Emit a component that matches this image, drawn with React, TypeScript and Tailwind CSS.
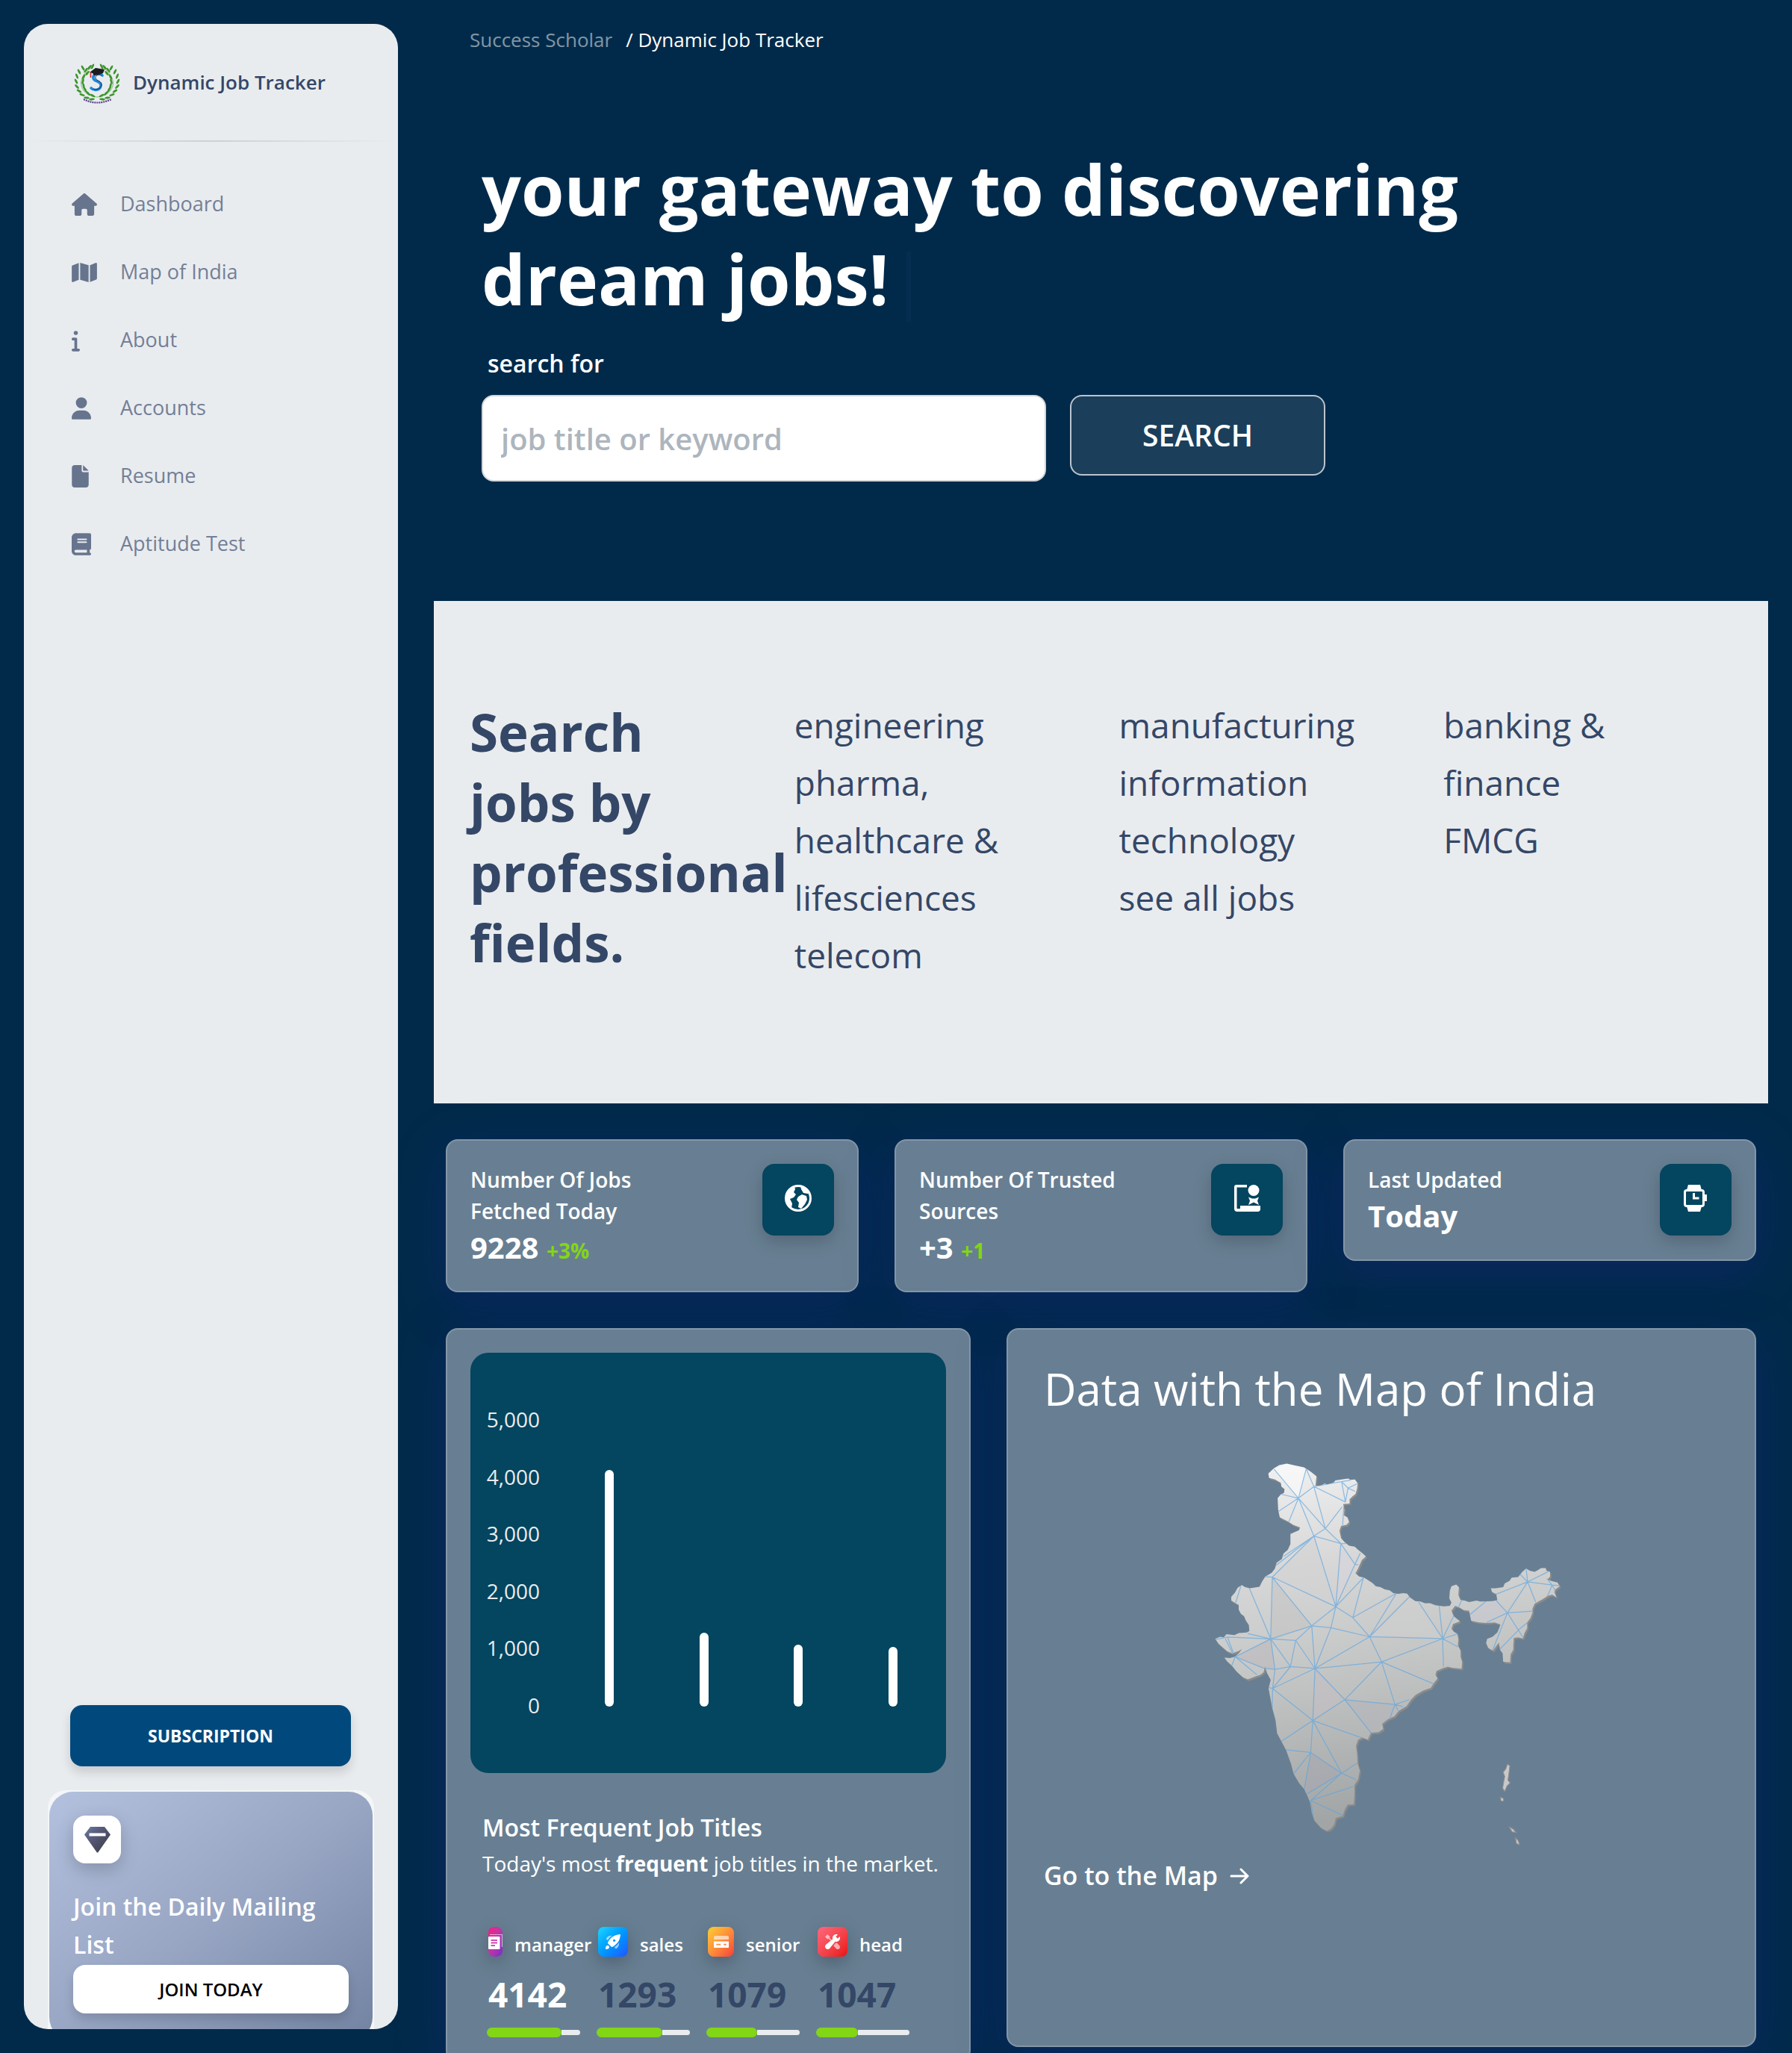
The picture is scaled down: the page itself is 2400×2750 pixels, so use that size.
import React from 'react';
import { FaBook, FaFile, FaHouse, FaInfo, FaMap, FaUser } from 'react-icons/fa6';

const NAV = [
  { label: 'Dashboard', Icon: FaHouse, width: 'w-[34px]' },
  { label: 'Map of India', Icon: FaMap, width: 'w-[34px]' },
  { label: 'About', Icon: FaInfo, width: 'w-[11px]' },
  { label: 'Accounts', Icon: FaUser, width: 'w-[26px]' },
  { label: 'Resume', Icon: FaFile, width: 'w-[23px]' },
  { label: 'Aptitude Test', Icon: FaBook, width: 'w-[26px]' },
];

const FIELDS = [
  ['engineering', 'pharma, healthcare & lifesciences', 'telecom'],
  ['manufacturing', 'information technology', 'see all jobs'],
  ['banking & finance', 'FMCG'],
];

const TICKS = ['5,000', '4,000', '3,000', '2,000', '1,000', '0'];
const CHART_MAX = 5000;

const CARD = 'rounded-2xl border-2 border-white/18 bg-[#687f93] shadow-[0_16px_64px_rgba(31,38,135,0.37)]';

/* ---------- logo ---------- */

// One side of the laurel: [x, y, angle] for every leaf.
const LEAVES: [number, number, number][] = [
  [20, 3, -50], [15, 7, -52], [24, 2, -65],
  [11, 4, 60], [6, 9, 62], [17, 11, -50],
  [3, 15, 68], [12, 16, -62], [2, 22, 62], [11, 22, -75],
  [3, 29, 48], [12, 28, 80], [6, 35, 34], [14, 33, 62],
  [10, 40, 20], [18, 38, 45], [16, 44, 6], [24, 41, 30], [23, 46, -8],
];

function Laurel() {
  return (
    <g>
      <path d="M22 4C12 10 7 20 9 28C12 38 20 42 30 43" fill="none" stroke="#3d9a2f" strokeWidth="0.600" />
      {LEAVES.map(([x, y, a]) => (
        <ellipse key={`${x}-${y}`} cx={x} cy={y} rx="3.800" ry="1.400" fill="#3b962c" transform={`rotate(${a} ${x} ${y})`} />
      ))}
    </g>
  );
}

function Logo() {
  return (
    <svg viewBox="0 -4 60 54" className="h-[54px] w-[60px] overflow-visible" aria-hidden="true">
      <Laurel />
      <g transform="matrix(-1 0 0 1 60 0)">
        <Laurel />
      </g>
      <path d="M37 14C33 9 24 12 25 18C26 23 36 21 35 28C34 34 26 35 22 31" fill="none" stroke="#1f86d8" strokeWidth="3.6" strokeLinecap="round" />
      <path d="M36 14C32 12 27 14 28 18C29 21 37 22 36 27C35 32 29 34 25 32" fill="none" stroke="#17324f" strokeWidth="1" />
      <path d="M20 10L28 4L40 6L38 11L32 13L26 14L24 11Z" fill="#1c1c20" />
      <path d="M21.500 10V17" stroke="#d8232a" strokeWidth="1.600" />
      <path d="M12 46Q30 55 49 46" fill="none" stroke="#5b3a8e" strokeWidth="2.200" strokeDasharray="2 1" />
    </svg>
  );
}

/* ---------- stat icons ---------- */

function GlobeIcon() {
  return (
    <svg viewBox="0 0 36 36" className="size-9" aria-hidden="true">
      <circle cx="18" cy="18" r="16.500" fill="none" stroke="#fff" strokeWidth="3" />
      <path d="M2 12C5 6 9 3 13 2L14 6L12 10L15 13L12 17L7 19L10 25L9 31C4 28 1 22 2 12Z" fill="#fff" />
      <path d="M21 1L22 6L25 11L31 12L33 11C31 6 27 2 21 1Z" fill="#fff" />
      <path d="M18 16L23 13L29 15L30 20L27 26L22 32L18 30L19 24L16 20Z" fill="#fff" />
    </svg>
  );
}

function CertificateIcon() {
  return (
    <svg viewBox="0 0 36 36" className="size-9" fill="#fff" aria-hidden="true">
      <path d="M18 0H4C2 0 1 1 1 3V32C1 34.500 2.500 36 5 36H33C34.500 36 36 34.500 36 33V28H9V32H4.500V3.500H18Z" />
      <circle cx="27" cy="7.500" r="7.500" />
      <path d="M20 16.500L25 18.500H29L34 16.500L32 21.500L34 27L27 23.500L20 27L22 21.500Z" />
    </svg>
  );
}

function WatchIcon() {
  return (
    <svg viewBox="0 0 36 36" className="size-9" fill="#fff" aria-hidden="true">
      <path d="M8 0H24L26 7H6Z" />
      <path d="M6 29H26L24 36H8Z" />
      <rect x="3.500" y="7.500" width="25" height="21" rx="2.500" fill="none" stroke="#fff" strokeWidth="3" />
      <path d="M29 13H33V22H29Z" />
      <path d="M14 11H17V16.500H22.500V19.500H14Z" />
    </svg>
  );
}

/* ---------- job title icons ---------- */

function DocumentIcon() {
  return (
    <svg viewBox="0 0 20 20" className="h-5 w-5 shrink-0" aria-hidden="true">
      <path d="M2 .500H18.500V17" fill="none" stroke="#fff" strokeOpacity=".6" strokeWidth="1.200" />
      <rect x="0" y="3" width="15.500" height="17" rx="1" fill="#fff" />
      <path d="M3.500 8H12M3.500 11.500H12M3.500 15H9" stroke="#c2159c" strokeWidth="1.400" />
    </svg>
  );
}

function RocketIcon() {
  return (
    <svg viewBox="0 0 40 40" className="size-5" fill="#fff" aria-hidden="true">
      <path d="M39.3,0.707 C38.966,0.37 38.505,0.192 38.032,0.217 C14.652,1.437 6.015,22.263 5.932,22.473 C5.682,23.093 5.827,23.801 6.298,24.273 L15.733,33.708 C16.201,34.176 16.902,34.319 17.517,34.072 C17.725,33.988 38.5,25.275 39.778,1.988 C39.804,1.511 39.634,1.045 39.3,0.707 Z M25.69,19.023 C24.737,19.977 23.303,20.262 22.057,19.746 C20.812,19.23 20,18.015 20,16.667 C20,15.318 20.812,14.103 22.057,13.587 C23.303,13.071 24.737,13.356 25.69,14.31 C26.991,15.612 26.991,17.722 25.69,19.023 Z" />
      <path d="M1.855,31.407 C3.051,30.202 4.8,29.73 6.44,30.167 C8.08,30.604 9.361,31.885 9.798,33.525 C10.235,35.165 9.763,36.914 8.558,38.11 C6.707,39.962 0,40 0,40 C0,40 0,33.257 1.855,31.407 Z" />
      <path opacity=".6" d="M17.262,3.902 C12.494,3.072 7.622,4.617 4.203,8.042 C3.312,8.941 2.537,9.949 1.897,11.042 C1.511,11.697 1.617,12.53 2.155,13.067 L5.47,16.383 C8.55,11.495 12.556,7.255 17.262,3.902 Z" />
      <path opacity=".6" d="M36.098,22.738 C36.928,27.506 35.383,32.378 31.958,35.797 C31.059,36.688 30.051,37.463 28.958,38.103 C28.303,38.489 27.47,38.383 26.933,37.845 L23.617,34.53 C28.505,31.45 32.745,27.444 36.098,22.738 Z" />
    </svg>
  );
}

function CardIcon() {
  return (
    <svg viewBox="0 0 43 36" className="w-5" fill="#fff" aria-hidden="true">
      <path opacity=".6" d="M43,10.748 L43,3.583 C43,1.604 41.396,0 39.417,0 L3.583,0 C1.604,0 0,1.604 0,3.583 L0,10.748 Z" />
      <path d="M0,16.125 L0,32.25 C0,34.23 1.604,35.833 3.583,35.833 L39.417,35.833 C41.396,35.833 43,34.23 43,32.25 L43,16.125 Z M19.708,26.875 L7.167,26.875 L7.167,23.292 L19.708,23.292 Z M35.833,26.875 L28.667,26.875 L28.667,23.292 L35.833,23.292 Z" />
    </svg>
  );
}

function ToolsIcon() {
  return (
    <svg viewBox="0 0 40 40" className="size-5" fill="#fff" aria-hidden="true">
      <path opacity=".6" d="M18.088,15.732 L11.178,8.822 L13.333,6.667 L6.667,0 L0,6.667 L6.667,13.333 L8.822,11.178 L15.315,17.672 Z" />
      <path opacity=".6" d="M31.567,23.233 C31.052,23.293 30.53,23.333 30,23.333 C29.492,23.333 28.987,23.303 28.48,23.245 L22.412,30.743 L29.942,38.273 C32.243,40.575 35.973,40.575 38.275,38.273 C40.577,35.972 40.577,32.242 38.275,29.94 Z" />
      <path d="M33.785,11.285 L28.715,6.215 L34.062,0.868 C32.82,0.315 31.448,0 30,0 C24.477,0 20,4.477 20,10 C20,10.99 20.148,11.943 20.417,12.847 L2.435,27.397 C0.95,28.708 0.063,30.595 0.003,32.573 C-0.058,34.553 0.71,36.492 2.11,37.89 C3.47,39.252 5.278,40 7.202,40 C9.267,40 11.237,39.113 12.603,37.565 L27.153,19.583 C28.057,19.852 29.01,20 30,20 C35.523,20 40,15.523 40,10 C40,8.552 39.685,7.18 39.132,5.937 Z" />
    </svg>
  );
}

const JOBS = [
  { name: 'manager', count: 4142, progress: 80, Icon: DocumentIcon, box: 'w-[19px] from-[#ff0080] to-[#7928ca]', tone: 'text-white' },
  { name: 'sales', count: 1293, progress: 70, Icon: RocketIcon, box: 'w-10 justify-center from-[#21d4fd] to-[#2152ff]', tone: 'text-[#344767]' },
  { name: 'senior', count: 1079, progress: 54, Icon: CardIcon, box: 'w-[35px] justify-center from-[#fbcf33] to-[#f53939]', tone: 'text-[#344767]' },
  { name: 'head', count: 1047, progress: 45, Icon: ToolsIcon, box: 'w-10 justify-center from-[#ff667c] to-[#ea0606]', tone: 'text-[#344767]' },
];

/* ---------- map ---------- */

const MAINLAND =
  'M331 125L352 106L372 94L400 88L425 94L465 102L490 118L512 136L510 150L508 172L530 170L542 163L552 166L575 160L583 151L610 147L630 144L640 149L656 148L666 162L664 182L658 202L648 210L636 222L636 238L612 240L616 262L614 282L628 290L634 308L624 318L604 322L598 340L604 368L618 384L634 396L655 400L668 412L684 424L697 436L682 450L674 468L668 482L658 500L672 512L690 516L706 526L722 536L734 548L752 552L768 560L786 564L800 574L818 577L838 574L852 576L862 590L882 604L902 606L918 612L938 612L958 620L990 624L1012 622L1018 610L1010 594L1012 566L1018 548L1036 542L1046 552L1044 582L1052 600L1068 602L1084 608L1112 602L1126 606L1174 604L1190 600L1186 578L1170 570L1166 556L1184 556L1212 552L1218 538L1236 528L1244 516L1268 514L1284 494L1298 482L1312 490L1330 494L1342 488L1354 480L1372 480L1374 490L1388 494L1388 512L1378 524L1398 530L1416 534L1424 548L1408 560L1404 570L1412 590L1396 580L1380 584L1362 596L1344 606L1330 614L1322 632L1322 648L1314 668L1302 684L1302 706L1292 724L1286 744L1268 740L1252 742L1250 770L1250 786L1240 804L1238 834L1212 832L1210 800L1200 786L1196 760L1186 772L1174 790L1156 780L1148 762L1152 746L1172 738L1190 722L1196 708L1202 692L1180 684L1150 686L1120 684L1092 678L1088 658L1084 640L1064 638L1048 628L1032 622L1018 640L1026 660L1050 680L1034 686L1024 690L1018 708L1028 720L1040 726L1044 748L1042 770L1052 790L1052 812L1058 832L1056 858L1020 854L1004 850L984 856L962 866L958 880L966 894L952 912L940 930L912 940L884 956L866 974L850 998L820 1016L804 1036L778 1048L758 1064L762 1084L744 1096L716 1098L704 1124L684 1116L668 1124L660 1146L664 1180L666 1214L674 1240L668 1272L654 1294L654 1330L652 1366L628 1368L618 1386L610 1410L584 1418L578 1442L566 1458L550 1466L528 1454L504 1428L494 1398L488 1360L478 1336L466 1310L446 1286L426 1252L416 1214L398 1164L380 1130L364 1100L358 1050L346 1006L338 964L332 932L340 900L326 874L318 848L314 870L302 880L280 888L254 898L236 890L212 868L194 846L176 830L166 816L186 818L206 812L222 798L232 784L218 792L196 800L176 792L160 778L144 764L132 746L150 738L164 740L174 728L204 732L220 724L250 722L260 716L258 694L246 676L240 660L228 652L220 636L220 618L208 612L192 602L192 588L206 572L216 554L232 544L244 552L262 556L298 550L308 530L320 512L344 498L356 482L362 460L382 446L388 426L404 412L414 390L414 352L446 338L450 328L424 318L406 306L374 290L368 262L366 218L378 204L390 198L392 184L380 174L378 160L356 148L334 142Z';

const MESH =
  'M352 108L444 218L473 108L502 174L444 218L378 203M444 218L368 268M444 218L408 306M444 218L502 360L545 332L444 218M502 174L545 332L608 250M502 174L620 232L606 156L502 174M606 156L630 180L664 164M630 180L656 192M630 180L620 232M614 250L610 320M606 156L640 150M502 360L603 388L545 332M603 388L622 388M502 360L584 625L603 388L656 466L584 625M656 466L676 424M656 466L668 468M502 360L346 514L320 512M502 360L388 436M502 360L360 470M346 514L584 625L688 516L648 666L584 625M346 514L340 746L260 556M346 514L494 697L584 625L566 704L494 697L340 746M494 697L434 752L340 746L414 850L434 752L506 857L494 697M566 704L506 857L711 738L566 704M648 666L711 738L812 574L648 666M711 738L860 588M711 738L985 745L895 608M985 745L972 622M985 745L1026 660M985 745L1040 728M985 745L1042 776M985 745L988 850M985 745L756 832L711 738M756 832L506 857L414 850L356 860L340 746L178 739L134 748M178 739L200 798M170 745L196 798M340 746L254 726M340 746L207 813L166 816M207 813L314 856M207 813L288 880M207 813L194 846M316 856L356 860L347 932L414 850M347 932L506 857L618 974L756 832L806 992L618 974L498 1052L506 857M756 832L950 914M806 992L860 974M806 992L836 1000M806 992L788 1042M806 992L818 1014M618 974L716 1098M498 1052L347 932L332 928M347 932L346 1006M498 1052L380 1130M498 1052L684 1118M498 1052L490 1172L398 1162M490 1172L426 1252M490 1172L466 1310M490 1172L606 1250L498 1052M606 1250L664 1212M606 1250L660 1274M606 1250L472 1330M606 1250L490 1352L650 1300M490 1352L614 1410M490 1352L502 1426M228 548L208 612M1045 626L1056 602M1088 654L1148 604M1150 684L1228 648L1184 600M1228 648L1322 642M1228 648L1304 532L1186 578M1304 532L1276 504M1304 532L1298 482M1304 532L1380 494M1304 532L1396 544L1424 546M1396 544L1376 520M1396 544L1378 586M1396 544L1410 570M1304 532L1334 608M1228 648L1172 790M1228 648L1286 740M1272 710L1200 784M1272 710L1304 684';

// Slightly darker or cooler facets between the mesh lines.
const FACETS: [string, string][] = [
  ['M352 108L444 218L473 108L400 88Z', '#fff'],
  ['M502 360L346 514L584 625Z', '#d2d2d4'],
  ['M346 514L340 746L494 697Z', '#c2c2c2'],
  ['M603 388L656 466L584 625Z', '#d6d3dc'],
  ['M711 738L985 745L895 608L860 588Z', '#cfcfcf'],
  ['M340 746L207 813L314 856L356 860Z', '#b9b5bb'],
  ['M506 857L498 1052L618 974Z', '#c3bdc2'],
  ['M618 974L806 992L788 1042L716 1098Z', '#b3b4ba'],
  ['M490 1172L606 1250L472 1330L466 1310Z', '#a5a5b0'],
  ['M1088 654L1148 604L1184 600L1228 648L1150 684L1092 678Z', '#c8c8d2'],
];

function IndiaMap() {
  return (
    <svg viewBox="80 70 1350 1460" className="mx-auto mt-14 w-[482px]" role="img" aria-label="Map of India">
      <defs>
        <linearGradient id="land" x1="0" y1="0" x2="0.15" y2="1">
          <stop offset="0" stopColor="#f3f3f3" />
          <stop offset="0.3" stopColor="#d8d8d8" />
          <stop offset="0.65" stopColor="#c0c2c2" />
          <stop offset="1" stopColor="#a2a5a5" />
        </linearGradient>
        <clipPath id="land-clip">
          <path d={MAINLAND} />
        </clipPath>
      </defs>
      <path d={MAINLAND} fill="#8b8b8b" transform="translate(5 6)" />
      <path d={MAINLAND} fill="url(#land)" />
      <g clipPath="url(#land-clip)">
        {FACETS.map(([d, fill]) => (
          <path key={d} d={d} fill={fill} opacity="0.5" />
        ))}
        <path d={MESH} fill="none" stroke="#5aa5e0" strokeOpacity="0.65" strokeWidth="3.500" strokeLinejoin="round" />
      </g>
      <g fill="#c9c9c9" stroke="#8f8f8f" strokeWidth="3">
        <path d="M1228 1216L1237 1222L1234 1248L1230 1276L1238 1286L1226 1298L1218 1318L1210 1306L1214 1282L1218 1262L1212 1246L1222 1234Z" />
        <path d="M1202 1340L1212 1344L1214 1354L1204 1354Z" />
        <path d="M1234 1450L1250 1460L1260 1472L1246 1470Z" />
        <path d="M1258 1492L1268 1502L1274 1518L1262 1514Z" />
      </g>
    </svg>
  );
}

/* ---------- page parts ---------- */

function Sidebar() {
  return (
    <aside className="flex w-[501px] shrink-0 flex-col overflow-hidden rounded-[32px] bg-[#e9ecef]">
      <a href="#home" className="flex items-center gap-[18px] pt-[51px] pl-[68px] text-[26px] leading-[54px] font-semibold text-[#344767]">
        <Logo />
        <span>Dynamic Job Tracker</span>
      </a>
      <hr className="mt-[51px] h-0.5 border-0 bg-linear-to-r from-transparent via-black/12 to-transparent" />
      <nav className="mt-[38px] flex flex-col pl-16">
        {NAV.map(({ label, Icon, width }) => (
          <a key={label} href={`#${label}`} className="flex h-[91px] items-center text-[27px] text-[#67748e]">
            <span className="w-[65px]">
              <Icon className={`h-[30px] ${width}`} />
            </span>
            <span className="opacity-90">{label}</span>
          </a>
        ))}
      </nav>
      <button className="mt-auto mr-[63px] ml-[62px] h-[82px] shrink-0 rounded-2xl bg-[#01497c] text-[23px] font-bold text-white shadow-[0_8px_14px_rgba(0,0,0,0.14)]">
        SUBSCRIPTION
      </button>
      <div className="mx-8 mt-8 h-[320px] shrink-0 overflow-hidden rounded-t-3xl bg-white/50 px-0.5 pt-0.5">
        <div className="h-[334px] rounded-[32px] bg-linear-to-br from-[#b3c1df] via-[#98a6c4] to-[#7283a1] px-8 pt-8">
          <div className="flex size-16 items-center justify-center rounded-2xl bg-white shadow-[0_8px_24px_rgba(0,0,0,0.2)]">
            <svg viewBox="0 0 35 35" className="size-[35px]" aria-hidden="true">
              <defs>
                <linearGradient id="gem" x1="0" y1="0" x2="1" y2="1">
                  <stop offset="0.1" stopColor="#627594" />
                  <stop offset="0.3" stopColor="#5b5e80" />
                  <stop offset="0.8" stopColor="#424352" />
                </linearGradient>
              </defs>
              <path d="M8 0H27L35 10.500L18.500 34Q17.500 35 16.500 34L0 10.500Z" fill="url(#gem)" />
              <path d="M6.500 8.500H28.500V12.500H6.500Z" fill="#fff" />
            </svg>
          </div>
          <h6 className="mt-8 text-[32px] leading-[51px] font-semibold text-white">Join the Daily Mailing List</h6>
          <button className="mt-0.5 h-[65px] w-full rounded-2xl bg-white text-2xl font-semibold text-black shadow-[0_8px_14px_rgba(0,0,0,0.14)]">
            JOIN TODAY
          </button>
        </div>
      </div>
    </aside>
  );
}

function Hero() {
  return (
    <section className="px-16 pt-[119px] text-white">
      <h1 className="max-w-[1500px] text-[93px] leading-[120px] font-bold">
        your gateway to discovering
        <br />
        dream jobs!
        <span className="ml-6 inline-block h-[94px] w-1.5 bg-[#042d4f] align-middle" />
      </h1>
      <form className="mt-[30px]" onSubmit={(e) => e.preventDefault()}>
        <label htmlFor="query" className="ml-2 block text-[32px] leading-[48px] font-semibold">
          search for
        </label>
        <div className="mt-[18px] flex items-start gap-8">
          <input
            id="query"
            type="text"
            placeholder="job title or keyword"
            className="h-[116px] w-[756px] rounded-2xl border-2 border-[#d2d6da] bg-white px-6 text-[40px] font-semibold text-[#344767] placeholder:text-[#adb5bd]"
          />
          <button className="h-[108px] w-[342px] rounded-2xl border-2 border-white/70 bg-[#1b3f5b] text-[39px] font-semibold">SEARCH</button>
        </div>
      </form>
    </section>
  );
}

function Fields() {
  return (
    <section className="mt-40 grid grid-cols-4 bg-[#e9ecef] pt-32 pb-40 pl-12 text-[#344767]">
      <h2 className="max-w-[340px] text-[69px] leading-[94px] font-bold">Search jobs by professional fields.</h2>
      {FIELDS.map((items) => (
        <ul key={items[0]} className="max-w-[300px] text-[46px] leading-[77px]">
          {items.map((item) => (
            <li key={item}>
              <a href={`#${item}`}>{item}</a>
            </li>
          ))}
        </ul>
      ))}
    </section>
  );
}

function Stat({ label, value, delta, icon }: { label: string; value: string; delta?: string; icon: React.ReactNode }) {
  return (
    <div className={`${CARD} flex items-start justify-between p-[31px]`}>
      <div className="text-white">
        <p className="max-w-[280px] text-[28px] leading-[42px] font-semibold">{label}</p>
        <p className="text-[40px] leading-[55px] font-bold">
          {value} {delta && <span className="text-[28px] leading-none text-[#82d616]">{delta}</span>}
        </p>
      </div>
      <div className="flex size-24 items-center justify-center rounded-2xl bg-[#04455f] pb-1 shadow-[0_8px_24px_rgba(0,0,0,0.2)]">{icon}</div>
    </div>
  );
}

function JobTitles() {
  return (
    <div className={`${CARD} p-[31px] text-white`}>
      <div className="flex h-[563px] rounded-3xl bg-[#04455f] pr-2">
        <ul className="box-content flex h-[425px] w-[93px] flex-col justify-between pt-[68px] text-right text-[28px] leading-[42px] text-[#e9ecef]">
          {TICKS.map((t) => (
            <li key={t}>{t}</li>
          ))}
        </ul>
        <div className="mt-[91px] ml-[30px] grid h-[383px] flex-1 grid-cols-4 items-end justify-items-center">
          {JOBS.map((j) => (
            <div key={j.name} className="w-3 rounded-full bg-white" style={{ height: `${(j.count / CHART_MAX) * 100}%` }} />
          ))}
        </div>
      </div>
      <div className="px-4">
        <h6 className="mt-[46px] text-[32px] leading-[54px] font-semibold">Most Frequent Job Titles</h6>
        <p className="text-[28px] leading-[42px] whitespace-nowrap">
          Today's most <strong className="font-bold">frequent</strong> job titles in the market.
        </p>
        <div className="mt-16 grid grid-cols-[repeat(4,125px)] gap-[22px] pl-1.5">
          {JOBS.map(({ name, count, progress, Icon, box, tone }) => (
            <div key={name}>
              <div className="flex items-end gap-4 pl-0.5">
                <span className={`flex h-10 shrink-0 items-center overflow-hidden rounded-lg bg-linear-to-br shadow-[0_8px_24px_rgba(0,0,0,0.25)] ${box}`}>
                  <Icon />
                </span>
                <span className="text-2xl leading-8 font-semibold">{name}</span>
              </div>
              <h4 className={`mt-5 pl-0.5 text-[46px] leading-[60px] font-bold ${tone}`}>{count}</h4>
              <div className="mt-[15px] flex h-[13px] items-center">
                <div className="h-[13px] rounded-full bg-[#82d616]" style={{ width: `${progress}%` }} />
                <div className="h-[7px] flex-1 rounded-r-full bg-[#e9ecef]" />
              </div>
            </div>
          ))}
        </div>
      </div>
    </div>
  );
}

function MapCard() {
  return (
    <div className={`${CARD} self-start px-12 pt-[42px] pb-[202px] text-white`}>
      <h2 className="text-[60px] leading-[75px]">Data with the Map of India</h2>
      <IndiaMap />
      <a href="#map" className="mt-3 inline-flex items-center gap-4 text-[34px] leading-[51px] font-semibold">
        Go to the Map
        <svg viewBox="0 0 26 26" className="size-[26px]" fill="none" stroke="currentColor" strokeWidth="3" strokeLinecap="round" strokeLinejoin="round" aria-hidden="true">
          <path d="M2 13H24M15 4L24 13L15 22" />
        </svg>
      </a>
    </div>
  );
}

export default function App() {
  return (
    <div className="flex h-screen gap-12 overflow-hidden bg-[#012a4a] p-8 font-['Open_Sans',sans-serif]">
      <Sidebar />
      <main className="min-w-0 flex-1">
        <nav aria-label="breadcrumb" className="flex gap-[18px] pl-12 text-[26px] leading-[42px] text-white">
          <a href="#scholar" className="opacity-50">
            Success Scholar
          </a>
          <span>/ Dynamic Job Tracker</span>
        </nav>
        <Hero />
        <Fields />
        <div className="grid grid-cols-3 items-start gap-12 px-4 pt-12">
          <Stat label="Number Of Jobs Fetched Today" value="9228" delta="+3%" icon={<GlobeIcon />} />
          <Stat label="Number Of Trusted Sources" value="+3" delta="+1" icon={<CertificateIcon />} />
          <Stat label="Last Updated" value="Today" icon={<WatchIcon />} />
        </div>
        <div className="grid grid-cols-[minmax(0,7fr)_minmax(0,10fr)] gap-12 px-4 pt-12">
          <JobTitles />
          <MapCard />
        </div>
      </main>
    </div>
  );
}
